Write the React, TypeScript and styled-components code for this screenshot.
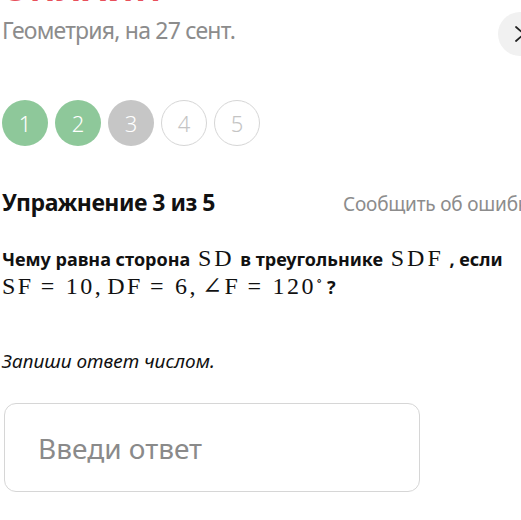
import React from 'react'
import styled, { createGlobalStyle } from 'styled-components'

const GlobalStyle = createGlobalStyle`
  html, body {
    margin: 0;
    padding: 0;
    background: #fff;
    overflow: hidden;
  }

  body {
    font-family: 'Noto Sans', 'Open Sans', sans-serif;
    color: #111;
  }
`

const steps = [
  { n: 1, state: 'done' },
  { n: 2, state: 'done' },
  { n: 3, state: 'current' },
  { n: 4, state: 'todo' },
  { n: 5, state: 'todo' },
] as const

type StepState = (typeof steps)[number]['state']

const App: React.FC = () => {
  return (
    <>
      <GlobalStyle />
      <Page>
        <Header>
          <div>
            <Title>ОНЛАЙН</Title>
            <Subtitle>Геометрия, на 27 сент.</Subtitle>
          </div>
          <NextButton aria-label='next'>
            <svg width='12' height='18' viewBox='0 0 12 18' fill='none'>
              <path d='M2 2l8 7-8 7' stroke='#222' strokeWidth='1.8' strokeLinecap='round' strokeLinejoin='round' />
            </svg>
          </NextButton>
        </Header>

        <Steps>
          {steps.map(({ n, state }) => (
            <Step key={n} $state={state}>
              {n}
            </Step>
          ))}
        </Steps>

        <ExerciseRow>
          <ExerciseTitle>Упражнение 3 из 5</ExerciseTitle>
          <Report>Сообщить об ошибке</Report>
        </ExerciseRow>

        <Question>
          Чему равна сторона <M $wide>SD</M> в треугольнике <M $wide>SDF</M> , если
          <br />
          <M>
            SF<Op>=</Op>10,<Thin />DF<Op>=</Op>6,<Thin />∠F<Op>=</Op>120<Sup>∘</Sup>
          </M>
          ?
        </Question>

        <Hint>Запиши ответ числом.</Hint>

        <AnswerBox>
          <AnswerInput placeholder='Введи ответ' />
        </AnswerBox>
      </Page>
    </>
  )
}

const Page = styled.div`
  width: 600px;
  margin-top: -32px;
  padding-left: 2px;
`

const Header = styled.div`
  width: 540px;
  display: flex;
  justify-content: space-between;
  align-items: flex-start;
`

const Title = styled.div`
  font-size: 34px;
  font-weight: 700;
  color: #e8505b;
  line-height: 40px;
  letter-spacing: 1px;
`

const Subtitle = styled.div`
  font-size: 23px;
  letter-spacing: -0.8px;
  color: #8c8c8c;
  line-height: 30px;
  margin-top: 7px;
`

const NextButton = styled.button`
  width: 44px;
  height: 44px;
  border-radius: 50%;
  border: none;
  background: #f1f1f1;
  display: flex;
  align-items: center;
  justify-content: center;
  padding: 0;
  margin-top: 44px;
`

const Steps = styled.div`
  display: flex;
  gap: 7px;
  margin-top: 44px;
`

const Step = styled.div<{ $state: StepState }>`
  width: 46px;
  height: 46px;
  box-sizing: border-box;
  border-radius: 50%;
  display: flex;
  align-items: center;
  justify-content: center;
  font-size: 22px;
  font-weight: 300;
  background: ${({ $state }) => ($state === 'done' ? '#8ec89a' : $state === 'current' ? '#c6c6c6' : '#fff')};
  color: ${({ $state }) => ($state === 'todo' ? '#c4c4c4' : '#fff')};
  border: ${({ $state }) => ($state === 'todo' ? '1.5px solid #d6d6d6' : 'none')};
`

const ExerciseRow = styled.div`
  display: flex;
  align-items: baseline;
  margin-top: 41px;
  line-height: 30px;
`

const ExerciseTitle = styled.h2`
  margin: 0;
  font-size: 23px;
  letter-spacing: -0.5px;
  line-height: 30px;
  font-weight: 700;
  width: 341px;
  color: #111;
`

const Report = styled.span`
  font-size: 19px;
  letter-spacing: -0.2px;
  color: #8c8c8c;
  white-space: nowrap;
`

const Question = styled.p`
  margin: 26px 0 0;
  font-size: 18px;
  font-weight: 700;
  line-height: 28px;
  color: #111;
`

const M = styled.span<{ $wide?: boolean }>`
  font-family: 'Liberation Serif', 'DejaVu Serif', serif;
  font-weight: 400;
  font-size: 24px;
  letter-spacing: ${({ $wide }) => ($wide ? '3px' : '2.5px')};
  margin: ${({ $wide }) => ($wide ? '0 1px 0 3px' : '0')};
  line-height: 1;
`

const Op = styled.span`
  margin: 0 9px 0 7px;
`

const Thin = styled.span`
  display: inline-block;
  width: 4px;
`

const Sup = styled.sup`
  font-size: 13px;
  line-height: 0;
  margin-right: 2px;
`

const Hint = styled.p`
  margin: 47px 0 0;
  font-size: 19px;
  line-height: 26px;
  font-style: italic;
  color: #111;
`

const AnswerBox = styled.div`
  margin-top: 29px;
  margin-left: 2px;
  width: 416px;
  height: 89px;
  box-sizing: border-box;
  border: 1.5px solid #d6d6d6;
  border-radius: 12px;
  display: flex;
  align-items: center;
`

const AnswerInput = styled.input`
  border: none;
  outline: none;
  background: transparent;
  font-family: 'Noto Sans', sans-serif;
  font-size: 28px;
  padding-left: 33px;
  width: 100%;

  &::placeholder {
    color: #8a8a8a;
  }
`

export default App
